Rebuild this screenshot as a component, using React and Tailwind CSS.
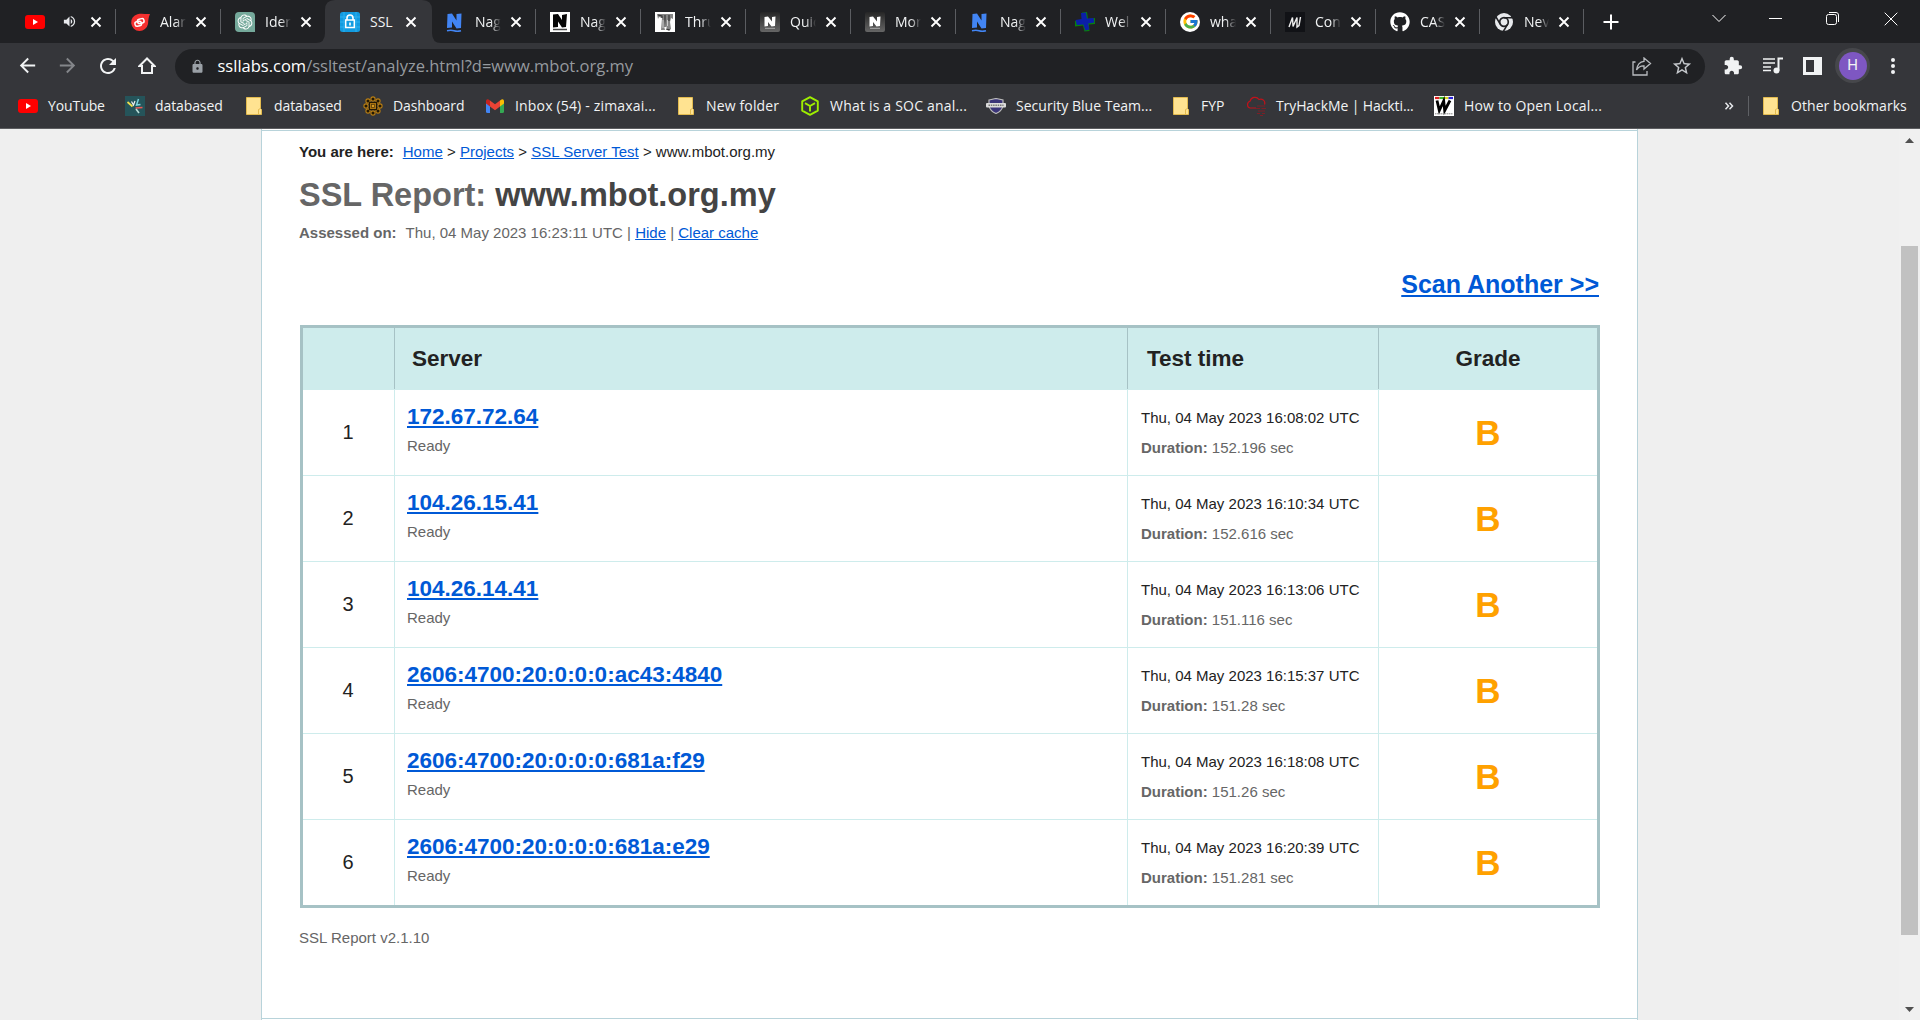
import React from "react";
import { RiOpenaiFill } from "react-icons/ri";
import { FcGoogle } from "react-icons/fc";
import { FaGithub } from "react-icons/fa";
import { MdExtension, MdStarBorder, MdLock, MdVolumeUp, MdRefresh, MdArrowBack, MdArrowForward } from "react-icons/md";

const YouTube = () => (
  <svg width="20" height="20" viewBox="0 0 20 20">
    <rect x="0" y="3" width="20" height="14" rx="3" fill="#f00" />
    <path d="M8 7l5 3-5 3z" fill="#fff" />
  </svg>
);
const AlarmFlame = () => (
  <svg width="20" height="20" viewBox="0 0 20 20">
    <path d="M20 2C16 2.500 12 1 7.500 2.200A8.500 8.500 0 1 0 18 12C18.300 8 18.500 5 20 2z" fill="#f5302f" />
    <g fill="none" stroke="#fff" strokeWidth="1.500">
      <rect x="7.500" y="7" width="6.500" height="4.500" rx="2" transform="rotate(-12 10 9)" />
      <rect x="4.800" y="9.500" width="6.500" height="4.500" rx="2" transform="rotate(-12 8 11)" />
    </g>
  </svg>
);
const OpenAI = () => (
  <span className="flex size-5 items-center justify-center rounded-tl-sm rounded-tr-sm rounded-bl-sm bg-[#75a99b]">
    <RiOpenaiFill className="size-[18px] text-white" />
  </span>
);
const SslLock = () => (
  <svg width="20" height="20" viewBox="0 0 20 20">
    <rect width="20" height="20" rx="2.500" fill="#129be0" />
    <path d="M0 5h20M0 10h20M0 15h20M4 0v20M16 0v20" stroke="#2fb0ee" strokeWidth="1" />
    <rect x="5.700" y="8" width="8.600" height="7.500" fill="#129be0" stroke="#fff" strokeWidth="1.500" />
    <path d="M7 8V6a3 3 0 0 1 6 0v2M10 10.500v3" fill="none" stroke="#fff" strokeWidth="1.600" />
  </svg>
);
const NagiosBlue = () => (
  <svg width="20" height="20" viewBox="0 0 20 20">
    <path d="M2.500 2l4.500-.5 4.500 7V2l5-.5-.5 14.500-4.500.5-4.500-7v6l-5 .5z" fill="#4285f4" />
    <path d="M2 18.800q4-1 7 0t7 0" fill="none" stroke="#4285f4" strokeWidth="1.600" />
  </svg>
);
const NagiosWhite = () => (
  <svg width="20" height="20" viewBox="0 0 20 20">
    <rect width="20" height="20" fill="#fff" />
    <path d="M3 2.500l5-.5 4 6V3l5-1-1 13-4 .5-4-6V15l-5 .5z" fill="#050505" />
    <path d="M3 17.500h14" stroke="#444" strokeWidth="1.500" />
  </svg>
);
const Thruk = () => (
  <svg width="20" height="20" viewBox="0 0 20 20">
    <rect width="20" height="20" fill="#fff" />
    <path d="M2 2h16v5l-2-1-1 4 1 7-3 2-2-5-1-7-1 7 1 4H6l1-12-3-1-1 2z" fill="#858585" />
    <path d="M3 3l4 1v2M10 3v12M14 3v6M11 17l4 1" fill="none" stroke="#333" strokeWidth="1.200" />
    <path d="M8 8v8M12.500 8v6" stroke="#ccc" />
  </svg>
);
const NagiosGray = () => (
  <svg width="20" height="20" viewBox="0 0 20 20">
    <defs>
      <linearGradient id="nagGray" x1="0" y1="0" x2="0" y2="1">
        <stop offset="0" stopColor="#262626" />
        <stop offset="1" stopColor="#666" />
      </linearGradient>
    </defs>
    <rect width="20" height="20" rx="2" fill="url(#nagGray)" />
    <path d="M4.500 5l3.500-.5 4 5V5l3.500-.500-.5 9.500-3.500.5-3.500-4.500v4l-3.500.5z" fill="#fff" />
    <path d="M5 16.300h10" stroke="#aaa" />
  </svg>
);
const BlueCross = () => (
  <svg width="20" height="20" viewBox="0 0 20 20">
    <path d="M7 .5l5-.5 1 7 7-1v6l-6 .500.500 6.500-5 .5-1.500-6-8 1V9l7-1z" fill="#07820c" />
    <path d="M6 1l5-.5 1 6 6.500-.500.800 4.500-6 1 1 6-4 1-2-6-6.500.500L.5 8l6-1z" fill="#0b1fa8" />
  </svg>
);
const GoogleFav = () => (
  <span className="flex size-5 items-center justify-center rounded-full bg-white">
    <FcGoogle className="size-[17px]" />
  </span>
);
const MFav = () => (
  <svg width="20" height="20" viewBox="0 0 20 20">
    <rect width="20" height="20" fill="#111216" />
    <path d="M4 15L7.500 5.500 8 14.500 12 5.500v9.500l2-1.500L15.500 5" fill="none" stroke="#eee" strokeWidth="1.400" />
  </svg>
);
const ChromeFav = () => (
  <svg width="20" height="20" viewBox="0 0 20 20">
    <circle cx="10" cy="10" r="9" fill="#e8eaed" />
    <circle cx="10" cy="10" r="4.300" fill="#e8eaed" stroke="#202124" strokeWidth="1.700" />
    <path d="M10 5.700h9M13.700 12.200L9.300 19.500M6.200 12.200L2 5" stroke="#202124" strokeWidth="1.500" />
  </svg>
);
const Folder = () => (
  <svg width="16" height="18" viewBox="0 0 16 18">
    <path d="M.5.500h14v11l1 1v5H.5z" fill="#ffe391" stroke="#e3bb4f" />
    <path d="M12.500 17v-4.500l2-1" fill="none" stroke="#e3bb4f" />
  </svg>
);
const DbFav = () => (
  <svg width="20" height="20" viewBox="0 0 20 20">
    <rect width="20" height="20" fill="#25545a" />
    <path d="M2.500 6l5 4.500" stroke="#f0df4e" strokeWidth="1.700" />
    <path d="M6.500 5.500l2 3.500L10 5" fill="none" stroke="#efefef" strokeWidth="1.200" />
    <path d="M13.500 3l-2 6 4-.500" fill="none" stroke="#7dd3dd" strokeWidth="1.500" />
    <path d="M10.500 12l7-.500" stroke="#ee5a55" strokeWidth="1.700" />
    <path d="M11 13l3 4" stroke="#b9ded9" strokeWidth="1.500" />
  </svg>
);
const Mandala = () => (
  <svg width="20" height="20" viewBox="0 0 20 20">
    <g fill="#221804" stroke="#b87d12" strokeWidth="1.100">
      <circle cx="10" cy="3" r="2.100" /><circle cx="10" cy="17" r="2.100" />
      <circle cx="3" cy="10" r="2.100" /><circle cx="17" cy="10" r="2.100" />
      <circle cx="5" cy="5" r="2.100" /><circle cx="15" cy="5" r="2.100" />
      <circle cx="5" cy="15" r="2.100" /><circle cx="15" cy="15" r="2.100" />
      <rect x="6.500" y="6.500" width="7" height="7" fill="#b17812" stroke="#221804" />
      <rect x="8.500" y="8.500" width="3" height="3" fill="#d79a24" stroke="#5a3d09" strokeWidth=".8" />
    </g>
  </svg>
);
const Gmail = () => (
  <svg width="18" height="14" viewBox="0 0 18 14">
    <path d="M0 2v10.500Q0 14 1.500 14H4V6z" fill="#4285f4" />
    <path d="M18 2v10.500Q18 14 16.500 14H14V6z" fill="#34a853" />
    <path d="M14 1.500L16 .2Q18 0 18 2v2.500l-4 3z" fill="#fbbc04" />
    <path d="M0 2Q0 0 2 .2L4 1.500v6L0 4.500z" fill="#c5221f" />
    <path d="M4 1.500l5 3.800 5-3.800v6L9 11.200 4 7.500z" fill="#ea4335" />
  </svg>
);
const Cube = () => (
  <svg width="18" height="20" viewBox="0 0 18 20">
    <path d="M9 1.200l7.800 4.200v9.200L9 18.800l-7.800-4.200V5.400zM4 7.200L9 10l5-2.800M9 10v5.500" fill="none" stroke="#9fef00" strokeWidth="1.900" strokeLinejoin="round" />
  </svg>
);
const Shield = () => (
  <svg width="20" height="16" viewBox="0 0 20 16">
    <path d="M3 2L10 .5 17 2v6q-1 5-7 7.500Q4 13 3 8z" fill="#3a3479" stroke="#bbb" strokeWidth="1.200" />
    <rect x="0" y="5" width="20" height="4.500" rx="1" fill="#dcdcdc" />
    <path d="M2.500 7.300h15" stroke="#777" strokeWidth="1.600" strokeDasharray="1.500 .8" />
  </svg>
);
const Cloud = () => (
  <svg width="20" height="20" viewBox="0 0 20 20">
    <path d="M10 12H4A3.500 3.500 0 0 1 4 5.300 5 5 0 0 1 13 3.500a4 4 0 0 1 5.500 5" fill="none" stroke="#c1121a" strokeWidth="1.200" />
    <path d="M11 10h8M10 12.500h4m1.500 0H20M12 15h7M11 17.500h3m2 0h3M14 19.500h3" stroke="#7c1f26" strokeWidth="1.100" />
  </svg>
);
const WFav = () => (
  <svg width="20" height="20" viewBox="0 0 20 20">
    <rect width="20" height="20" fill="#fff" />
    <path d="M1 2h4.500" stroke="#e02020" strokeWidth="2.200" />
    <path d="M5.500 2H10" stroke="#3bb528" strokeWidth="2.200" />
    <path d="M10 2h4.500" stroke="#d8d820" strokeWidth="2.200" />
    <path d="M14.500 2H19" stroke="#2a22d8" strokeWidth="2.200" />
    <path d="M3 4.500l2.300 10L9.700 5l1 9.500L16 4.500" fill="none" stroke="#000" strokeWidth="2.800" />
    <path d="M1 17.800h18" stroke="#888" strokeDasharray="1.500 .5" />
  </svg>
);

const CloseX = () => (
  <svg width="12" height="12" viewBox="0 0 12 12">
    <path d="M1.500 1.500l9 9M10.500 1.500l-9 9" stroke="#fff" strokeWidth="1.900" />
  </svg>
);

const tabs = [
  { icon: YouTube, text: "", audio: true },
  { icon: AlarmFlame, text: "Alar" },
  { icon: OpenAI, text: "Ider" },
  { icon: SslLock, text: "SSL", active: true },
  { icon: NagiosBlue, text: "Nag" },
  { icon: NagiosWhite, text: "Nag" },
  { icon: Thruk, text: "Thru" },
  { icon: NagiosGray, text: "Quic" },
  { icon: NagiosGray, text: "Mor" },
  { icon: NagiosBlue, text: "Nag" },
  { icon: BlueCross, text: "Wel" },
  { icon: GoogleFav, text: "wha" },
  { icon: MFav, text: "Con" },
  { icon: () => <FaGithub className="size-5 text-white" />, text: "CAS" },
  { icon: ChromeFav, text: "Nev" },
];

function Tab({ icon: Icon, text, audio, active, noLine, narrow }) {
  return (
    <div className={`relative flex h-[43px] shrink-0 items-center ${narrow ? "w-[104px]" : "w-[105px]"}`}>
      {active && (
        <svg className="absolute -left-[10px] top-0" width="125" height="43" viewBox="0 0 125 43">
          <path d="M0 43Q9 43 9 33V10Q9 0 19 0H106Q116 0 116 10V33Q116 43 125 43z" fill="#35363a" />
        </svg>
      )}
      <div className="relative ml-[14px] flex w-5 shrink-0 justify-center"><Icon /></div>
      {audio ? (
        <MdVolumeUp className="ml-[17px] size-[15px] shrink-0 text-[#e8eaed]" />
      ) : (
        <div className={`relative ml-[10px] shrink-0 whitespace-nowrap text-[14px] leading-5 text-[#f1f3f4] ${narrow ? "w-[25px]" : "w-[26px]"} ${active ? "" : "[mask-image:linear-gradient(to_right,#000_60%,transparent)]"}`}>
          {text}
        </div>
      )}
      <div className={`relative ${audio ? "ml-[13px]" : "ml-[9px]"}`}><CloseX /></div>
      {!noLine && <div className="absolute right-0 top-[9px] h-[25px] w-px bg-[#5b5d61]" />}
    </div>
  );
}

const bookmarks = [
  [YouTube, "YouTube", "w-[20px]", "ml-[10px] w-[77px] tracking-[-0.1px]"],
  [DbFav, "databased", "w-[20px]", "ml-[10px] w-[91px] tracking-[-0.1px]"],
  [Folder, "databased", "w-[16px]", "ml-[12px] w-[89px] tracking-[-0.1px]"],
  [Mandala, "Dashboard", "w-[20px]", "ml-[10px] w-[93px] tracking-[-0.1px]"],
  [Gmail, "Inbox (54) - zimaxai...", "w-[18px]", "ml-[11px] w-[163px] tracking-[0.17px]"],
  [Folder, "New folder", "w-[16px]", "ml-[12px] w-[95px] tracking-[0.15px]"],
  [Cube, "What is a SOC anal...", "w-[18px]", "ml-[11px] w-[156px] tracking-[0.2px]"],
  [Shield, "Security Blue Team...", "w-[20px]", "ml-[10px] w-[157px] tracking-[0.02px]"],
  [Folder, "FYP", "w-[16px]", "ml-[12px] w-[45px]"],
  [Cloud, "TryHackMe | Hackti...", "w-[20px]", "ml-[10px] w-[158px] tracking-[-0.1px]"],
  [WFav, "How to Open Local...", "w-[20px]", "ml-[10px] w-[180px] tracking-[0.17px]"],
];

function Browser() {
  return (
    <header className="h-[129px] overflow-hidden border-b border-[#5c5d60] bg-[#35363a] font-['Open_Sans','Noto_Sans',sans-serif]">
      <div className="flex h-[43px] bg-[#202124] pl-[11px]">
        {tabs.map((t, i) => (
          <Tab key={i} {...t} noLine={i === 2 || i === 3} narrow={i > 12} />
        ))}
        <div className="ml-[19px] flex items-center">
          <svg width="16" height="16" viewBox="0 0 16 16"><path d="M8 .500v15M.500 8h15" stroke="#fff" strokeWidth="2" /></svg>
        </div>
        <div className="ml-auto flex items-start pt-3">
          <svg className="mt-[2px]" width="14" height="9" viewBox="0 0 14 9"><path d="M.500 1l6.500 6.500L13.500 1" fill="none" stroke="#fff" /></svg>
          <svg className="ml-[43px]" width="13" height="13" viewBox="0 0 13 13"><path d="M0 6.500h13" stroke="#fff" /></svg>
          <svg className="ml-[44px]" width="13" height="13" viewBox="0 0 13 13">
            <rect x=".5" y="2.500" width="10" height="10" rx="2" fill="none" stroke="#fff" />
            <path d="M3 .500h7q2.500 0 2.500 2.500v7" fill="none" stroke="#fff" />
          </svg>
          <svg className="ml-[45px] mr-[22px]" width="14" height="14" viewBox="0 0 14 14"><path d="M.7.700l12.600 12.600M13.300.700L.7 13.300" stroke="#fff" /></svg>
        </div>
      </div>
      <div className="flex h-[45px] items-center text-[#f1f3f4]">
        <MdArrowBack className="ml-4 size-[23px]" />
        <MdArrowForward className="ml-[17px] size-[23px] text-[#84868a]" />
        <MdRefresh className="ml-[17px] size-6" />
        <svg className="ml-[18px]" width="18" height="18" viewBox="0 0 18 18">
          <path d="M9 1.500L1.500 9H4v7h10V9h2.500z" fill="none" stroke="currentColor" strokeWidth="2" />
        </svg>
        <div className="ml-[19px] mt-px flex h-[35px] w-[1530px] items-center rounded-full bg-[#202124]">
          <MdLock className="ml-[15px] size-[15px] text-[#9aa0a6]" />
          <div className="ml-[12.5px] whitespace-nowrap text-[16.5px] leading-6 text-[#969a9f]">
            <span className="text-white">ssllabs.com</span>/ssltest/analyze.html?d=www.mbot.org.my
          </div>
          <svg className="ml-auto" width="20" height="19" viewBox="0 0 20 19" fill="none" stroke="#b9bcc0" strokeWidth="1.300">
            <path d="M3.500 5H1v13h14v-4" />
            <path d="M12 1l6.500 5.500L12 12V8.800Q7 8.500 4.500 13 5.500 5 12 4.300z" />
          </svg>
          <MdStarBorder className="ml-[19px] mr-[12px] size-[22px] text-[#c5c8cc]" />
        </div>
        <MdExtension className="ml-[18px] size-5" />
        <svg className="ml-[20px]" width="20" height="17" viewBox="0 0 20 17">
          <path d="M0 2h12M0 6h12M0 10h8M0 13.500h8" stroke="currentColor" strokeWidth="1.700" />
          <path d="M15.500 13.500V1.500H20" fill="none" stroke="currentColor" strokeWidth="2" />
          <circle cx="13.500" cy="13.500" r="3" fill="currentColor" />
        </svg>
        <svg className="ml-[20px]" width="19" height="18" viewBox="0 0 19 18">
          <path d="M0 0h19v18H0zM3 3v12h8V3z" fill="currentColor" fillRule="evenodd" />
        </svg>
        <div className="ml-[13px] flex size-[35px] items-center justify-center rounded-full bg-[#46474b]">
          <div className="flex size-7 items-center justify-center rounded-full bg-[#7e57c2] font-[Roboto,sans-serif] text-[15px]">H</div>
        </div>
        <svg className="ml-[20px]" width="6" height="18" viewBox="0 0 6 18" fill="currentColor">
          <circle cx="3" cy="3" r="2" /><circle cx="3" cy="9" r="2" /><circle cx="3" cy="15" r="2" />
        </svg>
      </div>
      <div className="flex h-[36px] items-center pl-[18px] text-[14px] leading-5 text-[#f1f3f4]">
        {bookmarks.map(([Icon, label, iw, tw], i) => (
          <div key={i} className="flex shrink-0 items-center">
            <div className={`flex shrink-0 justify-center ${iw}`}><Icon /></div>
            <div className={`shrink-0 whitespace-nowrap ${tw}`}>{label}</div>
          </div>
        ))}
        <svg className="ml-auto" width="10" height="8" viewBox="0 0 10 8">
          <path d="M1.500.8l3 3.200-3 3.200M5.500.8l3 3.200-3 3.200" fill="none" stroke="#e8eaed" strokeWidth="1.500" />
        </svg>
        <div className="ml-[14px] h-5 w-px bg-[#5f6165]" />
        <div className="ml-[14px] w-4"><Folder /></div>
        <div className="ml-[12px] w-[129px] whitespace-nowrap tracking-[0.06px]">Other bookmarks</div>
      </div>
    </header>
  );
}

const rows = [
  ["172.67.72.64", "16:08:02", "152.196"],
  ["104.26.15.41", "16:10:34", "152.616"],
  ["104.26.14.41", "16:13:06", "151.116"],
  ["2606:4700:20:0:0:0:ac43:4840", "16:15:37", "151.28"],
  ["2606:4700:20:0:0:0:681a:f29", "16:18:08", "151.26"],
  ["2606:4700:20:0:0:0:681a:e29", "16:20:39", "151.281"],
];

const Link = ({ children }) => <a className="text-[#0059d6] underline">{children}</a>;

export default function App() {
  return (
    <div className="flex h-[1020px] w-[1920px] flex-col overflow-hidden bg-[#efefef]">
      <Browser />
      <div className="flex min-h-0 flex-1">
        <main className="ml-[261px] h-full w-[1377px] shrink-0 border-x border-[#b8d3da] bg-white font-['Liberation_Sans',Arial,sans-serif] text-[15px] text-[#222]">
          <div className="mt-px h-[889px] border-y border-[#b8d3da] px-[38px]">
            <div className="-ml-px pt-[11px] leading-5">
              <b className="mr-[9px]">You are here:</b>
              <Link>Home</Link> &gt; <Link>Projects</Link> &gt; <Link>SSL Server Test</Link> &gt; www.mbot.org.my
            </div>
            <h1 className="-ml-px mt-[13px] text-[32.5px] font-bold leading-10 text-[#666]">
              SSL Report: <span className="text-[#444]">www.mbot.org.my</span>
            </h1>
            <div className="-ml-px mt-[8px] leading-5 text-[#666]">
              <b className="mr-[9px]">Assessed on:</b>Thu, 04 May 2023 16:23:11 UTC | <Link>Hide</Link> | <Link>Clear cache</Link>
            </div>
            <div className="mt-[26px] text-right text-[25px] font-bold leading-[30px]">
              <Link>Scan Another &gt;&gt;</Link>
            </div>
            <div className="mt-[26px] h-[583px] w-[1300px] border-[3px] border-[#a6c2c5]">
              <div className="grid h-[62px] grid-cols-[92px_733px_251px_218px] border-b border-[#ceecec] bg-[#ceecec] text-[22.5px] font-bold leading-[61px]">
                <div className="border-r border-[#a6c2c5]" />
                <div className="border-r border-[#a6c2c5] pl-[17px]">Server</div>
                <div className="border-r border-[#a6c2c5] pl-[19px]">Test time</div>
                <div className="text-center">Grade</div>
              </div>
              {rows.map(([ip, time, dur], i) => (
                <div key={ip} className={`grid grid-cols-[92px_733px_251px_218px] ${i < 5 ? "h-[86px] border-b border-[#ceecec]" : "h-[85px]"}`}>
                  <div className="border-r border-[#ceecec] pr-px text-center text-[20px] leading-[85px]">{i + 1}</div>
                  <div className="border-r border-[#ceecec] pl-[12px] pt-[13px]">
                    <div className="text-[22.5px] font-bold leading-[28px]"><Link>{ip}</Link></div>
                    <div className="mt-[5px] leading-5 text-[#666]">Ready</div>
                  </div>
                  <div className="border-r border-[#ceecec] pl-[13px] pt-[18px] leading-5">
                    <div>Thu, 04 May 2023 {time} UTC</div>
                    <div className="mt-[10px] text-[#666]"><b>Duration:</b> {dur} sec</div>
                  </div>
                  <div className="text-center text-[35px] font-bold leading-[85px] text-[#ffa100]">B</div>
                </div>
              ))}
            </div>
            <div className="-ml-px mt-[20px] leading-5 text-[#666]">SSL Report v2.1.10</div>
          </div>
        </main>
        <div className="ml-auto flex w-[21px] flex-col items-center bg-[#f0f0f0]">
          <svg className="mt-[9px] shrink-0" width="9" height="5" viewBox="0 0 9 5"><path d="M0 5l4.500-5L9 5z" fill="#505050" /></svg>
          <div className="mt-[103px] h-[689px] w-[17px] shrink-0 bg-[#c1c1c1]" />
          <svg className="mb-[8px] mt-auto shrink-0" width="9" height="5" viewBox="0 0 9 5"><path d="M0 0l4.500 5L9 0z" fill="#505050" /></svg>
        </div>
      </div>
    </div>
  );
}
